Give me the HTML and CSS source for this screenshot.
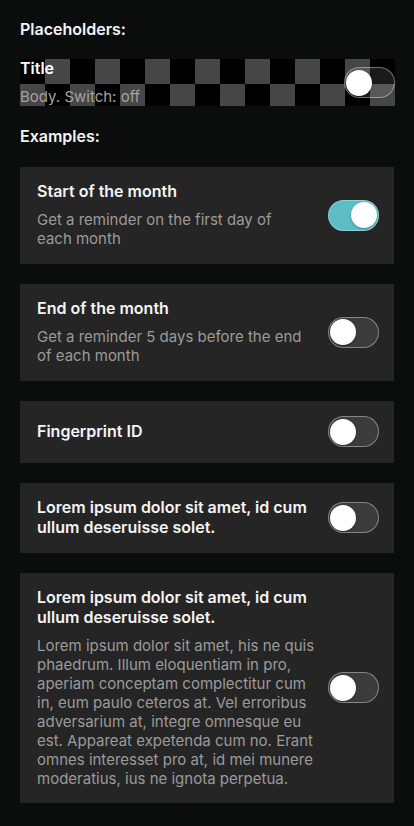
FILE: index.html
```html
<!DOCTYPE html>
<html lang="en">
<head>
<meta charset="utf-8">
<title>Switch cells</title>
<link rel="stylesheet" href="styles.css">
</head>
<body>
<main class="page">
  <h2 class="section">Placeholders:</h2>
  <div class="placeholder">
    <div class="ph-text">
      <div class="ph-title">Title</div>
      <div class="ph-body">Body. Switch: off</div>
    </div>
    <span class="switch"><span class="knob"></span></span>
  </div>

  <h2 class="section examples">Examples:</h2>

  <div class="card">
    <div class="text">
      <div class="title">Start of the month</div>
      <div class="body narrow">Get a reminder on the first day of each month</div>
    </div>
    <span class="switch on"><span class="knob"></span></span>
  </div>

  <div class="card">
    <div class="text">
      <div class="title">End of the month</div>
      <div class="body">Get a reminder 5 days before the end of each month</div>
    </div>
    <span class="switch"><span class="knob"></span></span>
  </div>

  <div class="card">
    <div class="text">
      <div class="title">Fingerprint ID</div>
    </div>
    <span class="switch"><span class="knob"></span></span>
  </div>

  <div class="card">
    <div class="text">
      <div class="title">Lorem ipsum dolor sit amet, id cum ullum deseruisse solet.</div>
    </div>
    <span class="switch"><span class="knob"></span></span>
  </div>

  <div class="card">
    <div class="text">
      <div class="title">Lorem ipsum dolor sit amet, id cum ullum deseruisse solet.</div>
      <div class="body">Lorem ipsum dolor sit amet, his ne quis phaedrum. Illum eloquentiam in pro, aperiam conceptam complectitur cum in, eum paulo ceteros at. Vel erroribus adversarium at, integre omnesque eu est. Appareat expetenda cum no. Erant omnes interesset pro at, id mei munere moderatius, ius ne ignota perpetua.</div>
    </div>
    <span class="switch"><span class="knob"></span></span>
  </div>
</main>
</body>
</html>
```

FILE: styles.css
```css
html, body {
  margin: 0;
  padding: 0;
  background: #0b0d0c;
}

body {
  font-family: Inter, "Noto Sans", "Liberation Sans", sans-serif;
  font-size: 15px;
  line-height: 19px;
  color: #f2f2f2;
  -webkit-font-smoothing: antialiased;
}

.page {
  display: flex;
  flex-direction: column;
  padding: 20px 20px 22px 20px;
}

.section {
  margin: 0;
  font-size: 16px;
  line-height: 19.5px;
  font-weight: 600;
  color: #f4f4f4;
}

.placeholder {
  margin-top: 19.5px;
  height: 47px;
  margin-right: -1px;
  display: flex;
  align-items: center;
  justify-content: space-between;
  background-color: #000;
  background-image: conic-gradient(#464646 0deg 90deg, #000 90deg 180deg, #464646 180deg 270deg, #000 270deg 360deg);
  background-size: 50px 50px;
  background-position: 0 0;
}

.ph-text {
  display: flex;
  flex-direction: column;
  gap: 8.5px;
}

.ph-title {
  font-size: 16px;
  line-height: 19.5px;
  font-weight: 600;
  color: #fff;
}

.ph-body {
  color: #a3a3a3;
}

.examples {
  margin-top: 21px;
  margin-bottom: 20px;
}

.card {
  background: #252525;
  display: flex;
  align-items: center;
  gap: 10px;
  padding: 15.5px 15px 15.5px 17px;
  margin-bottom: 20px;
}

.text {
  flex: 1;
  display: flex;
  flex-direction: column;
  gap: 8.5px;
  min-width: 0;
}

.title {
  font-size: 16px;
  line-height: 19.5px;
  font-weight: 600;
  color: #f4f4f4;
}

.body {
  color: #9b9b9b;
}

.body.narrow {
  max-width: 270px;
}

.switch {
  flex: none;
  box-sizing: border-box;
  width: 51px;
  height: 31px;
  border-radius: 16px;
  border: 1.5px solid rgba(255, 255, 255, 0.38);
  background: rgba(255, 255, 255, 0.1);
  display: flex;
  align-items: center;
  padding: 0 1px;
}

.switch.on {
  background: #5bbec4;
  border-color: rgba(255, 255, 255, 0.3);
  justify-content: flex-end;
}

.knob {
  width: 26px;
  height: 26px;
  border-radius: 50%;
  background: #fff;
  box-shadow: 0 1px 2px rgba(0, 0, 0, 0.3);
}
```
